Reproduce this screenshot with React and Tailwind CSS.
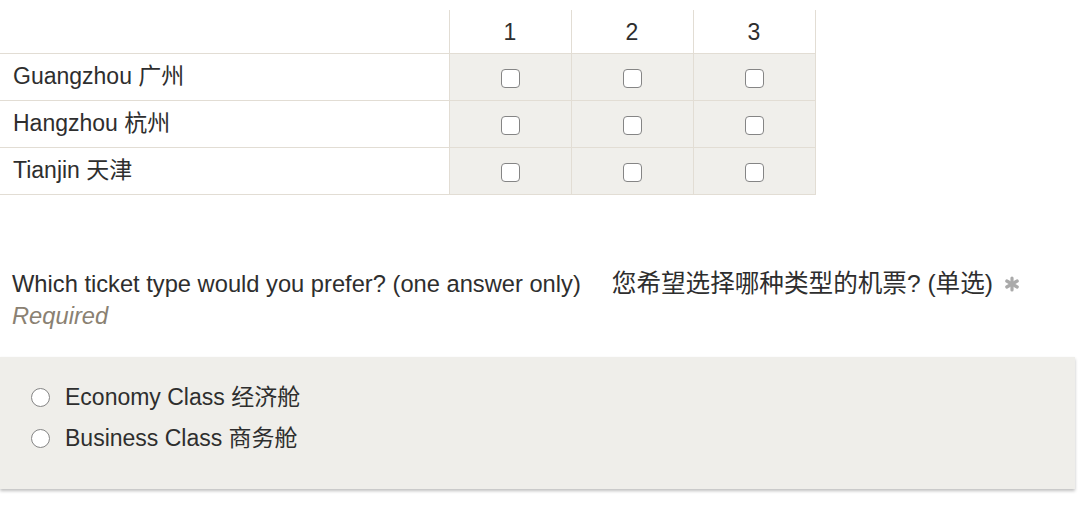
const cities = ['Guangzhou 广州', 'Hangzhou 杭州', 'Tianjin 天津'];
const cols = ['1', '2', '3'];
const font = { fontFamily: '"Liberation Sans", "Noto Sans CJK SC", sans-serif' };

function Box() {
  return <span className="inline-block w-[19px] h-[19px] rounded-[4px] border-[1.5px] border-[#858585] bg-white align-middle" />;
}

function Radio() {
  return <span className="inline-block w-[19px] h-[19px] rounded-full border-[1.5px] border-[#858585] bg-white shrink-0" />;
}

export default function App() {
  return (
    <div className="w-[1080px] h-[519px] bg-white text-[#2e2e2e] overflow-hidden" style={font}>
      <table className="mt-[10px] border-collapse text-[23px]">
        <thead>
          <tr className="h-[43px]">
            <th className="w-[449px] p-0 border-b border-[#e2ddd4]" />
            {cols.map((c) => (
              <th key={c} className="w-[122px] p-0 pt-[1px] font-normal border-x border-b border-[#e2ddd4] bg-white">
                {c}
              </th>
            ))}
          </tr>
        </thead>
        <tbody>
          {cities.map((city) => (
            <tr key={city} className="h-[47px]">
              <td className="pl-[13px] border-b border-[#e2ddd4]">{city}</td>
              {cols.map((c) => (
                <td key={c} className="text-center border border-[#e2ddd4] bg-[#f0efeb]">
                  <Box />
                </td>
              ))}
            </tr>
          ))}
        </tbody>
      </table>

      <div className="mt-[73px] pl-[12px] text-[23.7px] leading-[32px]">
        <div className="flex items-center">
          <span>Which ticket type would you prefer? (one answer only)</span>
          <span className="ml-[31px] text-[24.6px]">您希望选择哪种类型的机票? (单选)</span>
          <svg className="ml-[11px]" width="16" height="16" viewBox="0 0 16 16">
            <g stroke="#aaa" strokeWidth="3.2" strokeLinecap="round">
              <line x1="8" y1="2" x2="8" y2="14" />
              <line x1="2.8" y1="5" x2="13.2" y2="11" />
              <line x1="2.8" y1="11" x2="13.2" y2="5" />
            </g>
          </svg>
        </div>
        <div className="italic text-[#8a8172]">Required</div>
      </div>

      <div className="mt-[25px] w-[1075px] h-[132px] bg-[#efeeea] shadow-[0_2px_3px_rgba(0,0,0,0.25)] pt-[20px] pl-[31px] text-[23px]">
        {['Economy Class 经济舱', 'Business Class 商务舱'].map((o) => (
          <div key={o} className="flex items-center h-[41px] gap-[15px]">
            <Radio />
            <span>{o}</span>
          </div>
        ))}
      </div>
    </div>
  );
}
